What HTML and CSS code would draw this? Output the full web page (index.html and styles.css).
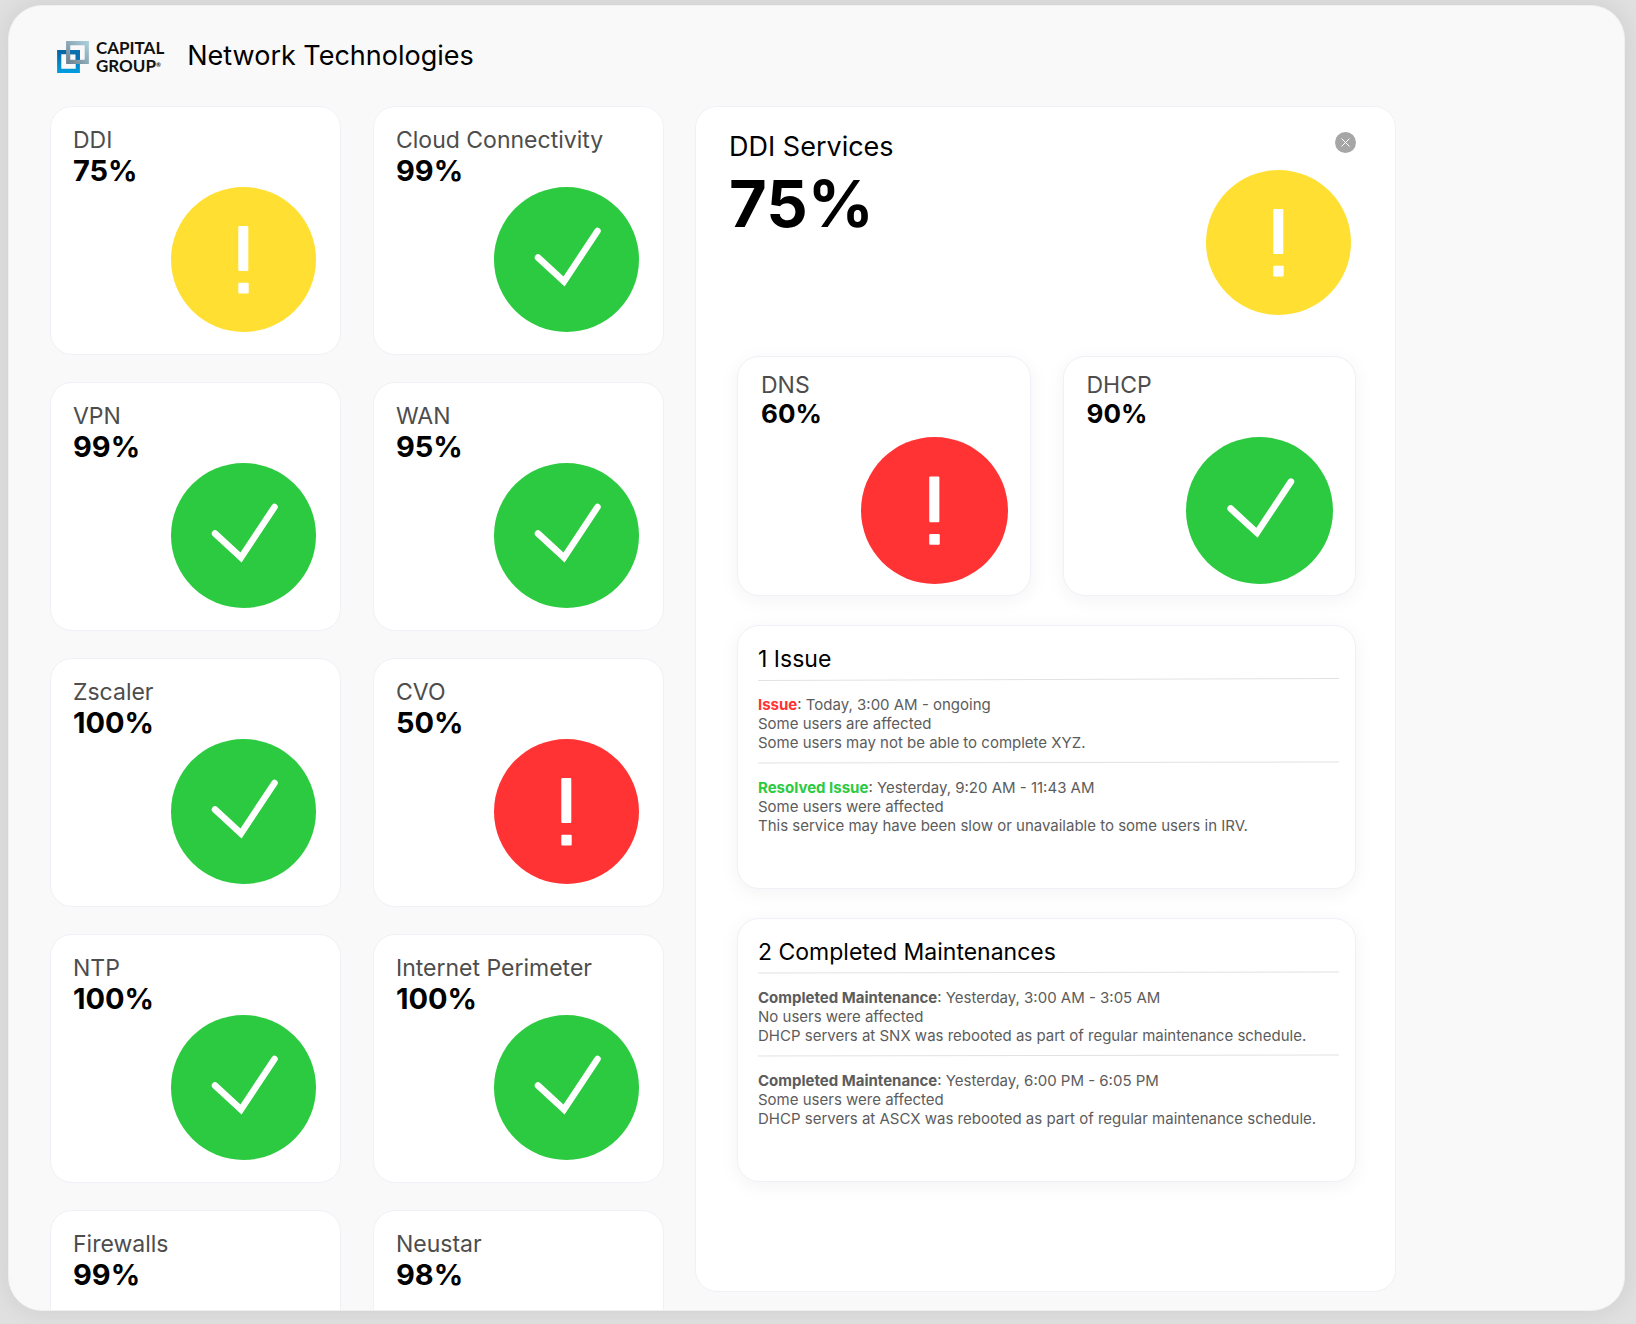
FILE: index.html
```html
<!DOCTYPE html>
<html lang="en">
<head>
<meta charset="utf-8">
<meta name="viewport" content="width=device-width, initial-scale=1">
<title>Network Technologies</title>
<link rel="stylesheet" href="styles.css">
</head>
<body>
<svg class="defs" aria-hidden="true">
  <symbol id="ok" viewBox="0 0 145 145">
    <circle cx="72.5" cy="72.5" r="72.5" fill="#2cca41"/>
    <path d="M44 70.5 70 94.500 103.500 44" fill="none" stroke="#fff" stroke-width="6.500" stroke-linecap="round"/>
  </symbol>
  <symbol id="alert" viewBox="0 0 145 145">
    <circle cx="72.5" cy="72.5" r="72.5" fill="currentColor"/>
    <rect x="67.300" y="39" width="10" height="45" rx="1" fill="#fff"/>
    <rect x="67.300" y="95.800" width="10.400" height="10.600" rx="1" fill="#fff"/>
  </symbol>
</svg>
<div class="window">
  <header class="topbar">
    <a class="logo" href="#" aria-label="Capital Group">
      <svg class="logo-mark" viewBox="0 0 32 32" aria-hidden="true">
        <defs>
          <linearGradient id="blue" x1="0" y1="0" x2="0" y2="1"><stop offset="0" stop-color="#0667a8"/><stop offset="1" stop-color="#009bdc"/></linearGradient>
          <linearGradient id="grey" x1="0" y1="1" x2="1" y2="0"><stop offset="0" stop-color="#6f8593"/><stop offset="1" stop-color="#a9ccda"/></linearGradient>
        </defs>
        <path d="M2.200 11.200H20.800V29.800H2.200Z" fill="none" stroke="url(#blue)" stroke-width="4.200"/>
        <path d="M11.200 2.200H29.800V20.800H11.200Z" fill="none" stroke="url(#grey)" stroke-width="4.200"/>
        <path d="M13.300 11.200H20.800V18.700" fill="none" stroke="#0b70b0" stroke-width="4.200"/>
      </svg>
      <span class="logo-text">CAPITAL<br>GROUP<sup>®</sup></span>
    </a>
    <h1 class="title">Network Technologies</h1>
  </header>
  <main class="layout">
    <section class="tiles" aria-label="Services">
      <article class="tile"><div><h2 class="label">DDI</h2><p class="value">75%</p></div><svg class="status warn"><use href="#alert"/></svg></article>
      <article class="tile"><div><h2 class="label">Cloud Connectivity</h2><p class="value">99%</p></div><svg class="status"><use href="#ok"/></svg></article>
      <article class="tile"><div><h2 class="label">VPN</h2><p class="value">99%</p></div><svg class="status"><use href="#ok"/></svg></article>
      <article class="tile"><div><h2 class="label">WAN</h2><p class="value">95%</p></div><svg class="status"><use href="#ok"/></svg></article>
      <article class="tile"><div><h2 class="label">Zscaler</h2><p class="value">100%</p></div><svg class="status"><use href="#ok"/></svg></article>
      <article class="tile"><div><h2 class="label">CVO</h2><p class="value">50%</p></div><svg class="status down"><use href="#alert"/></svg></article>
      <article class="tile"><div><h2 class="label">NTP</h2><p class="value">100%</p></div><svg class="status"><use href="#ok"/></svg></article>
      <article class="tile"><div><h2 class="label">Internet Perimeter</h2><p class="value">100%</p></div><svg class="status"><use href="#ok"/></svg></article>
      <article class="tile"><div><h2 class="label">Firewalls</h2><p class="value">99%</p></div></article>
      <article class="tile"><div><h2 class="label">Neustar</h2><p class="value">98%</p></div></article>
    </section>
    <section class="panel" aria-labelledby="panel-title">
      <header class="panel-head">
        <div>
          <h2 class="title" id="panel-title">DDI Services</h2>
          <p class="total">75%</p>
        </div>
        <div class="panel-side">
          <button class="close" type="button" aria-label="Close">
            <svg viewBox="0 0 9 9" aria-hidden="true"><path d="M.5.5 8.500 8.500M8.500.5.5 8.500" stroke="#fff" stroke-width="1"/></svg>
          </button>
          <svg class="status warn"><use href="#alert"/></svg>
        </div>
      </header>
      <div class="panel-body">
        <div class="parts">
          <article class="part"><div><h3 class="label">DNS</h3><p class="value">60%</p></div><svg class="status down"><use href="#alert"/></svg></article>
          <article class="part"><div><h3 class="label">DHCP</h3><p class="value">90%</p></div><svg class="status"><use href="#ok"/></svg></article>
        </div>
        <section class="log">
          <h3 class="log-title">1 Issue</h3>
          <svg class="rule" viewBox="0 0 100 3" preserveAspectRatio="none" aria-hidden="true"><path d="M0 2.500 100 .5"/></svg>
          <p class="entry"><strong class="open">Issue</strong>: Today, 3:00 AM - ongoing<br>Some users are affected<br>Some users may not be able to complete XYZ.</p>
          <svg class="rule" viewBox="0 0 100 3" preserveAspectRatio="none" aria-hidden="true"><path d="M0 2 100 1"/></svg>
          <p class="entry"><strong class="resolved">Resolved Issue</strong>: Yesterday, 9:20 AM - 11:43 AM<br>Some users were affected<br>This service may have been slow or unavailable to some users in IRV.</p>
        </section>
        <section class="log">
          <h3 class="log-title">2 Completed Maintenances</h3>
          <svg class="rule" viewBox="0 0 100 3" preserveAspectRatio="none" aria-hidden="true"><path d="M0 2 100 1"/></svg>
          <p class="entry"><strong>Completed Maintenance</strong>: Yesterday, 3:00 AM - 3:05 AM<br>No users were affected<br>DHCP servers at SNX was rebooted as part of regular maintenance schedule.</p>
          <svg class="rule" viewBox="0 0 100 3" preserveAspectRatio="none" aria-hidden="true"><path d="M0 2 100 1"/></svg>
          <p class="entry"><strong>Completed Maintenance</strong>: Yesterday, 6:00 PM - 6:05 PM<br>Some users were affected<br>DHCP servers at ASCX was rebooted as part of regular maintenance schedule.</p>
        </section>
      </div>
    </section>
  </main>
</div>
</body>
</html>
```

FILE: styles.css
```css
* { box-sizing: border-box; }
h1, h2, h3, p { margin: 0; font-weight: 400; }

body {
  margin: 0;
  height: 100vh;
  padding: 5px 11px 13px 8px;
  background: #e0e0e0;
  color: #000;
  font-family: Inter, "Liberation Sans", sans-serif;
  overflow: hidden;
}

.defs { display: none; }

.window {
  height: 100%;
  display: flex;
  flex-direction: column;
  overflow: hidden;
  border: 1px solid #f0f0f0;
  border-radius: 34px;
  background: #f9f9f9;
  box-shadow: 0 0 24px rgba(0, 0, 0, .09);
}

.topbar {
  display: flex;
  align-items: flex-start;
  gap: 23px;
  padding: 33px 48px;
  height: 100px;
  flex: none;
}

.logo {
  display: flex;
  align-items: center;
  gap: 7px;
  color: #111;
  text-decoration: none;
}
.logo-mark { width: 32px; height: 32px; }
.logo-text {
  font: 700 17px/18px Lato, sans-serif;
}
.logo-text sup { font-size: 6px; line-height: 0; vertical-align: 5px; }

.title { font-size: 27px; line-height: 34px; }

.layout {
  flex: 1;
  min-height: 0;
  display: grid;
  grid-template-columns: minmax(0, 614fr) minmax(0, 701fr);
  grid-template-rows: minmax(0, 1fr);
  gap: 31px;
  padding: 0 228px 18px 41px;
}

.tiles {
  display: grid;
  grid-template-columns: 1fr 1fr;
  grid-auto-rows: 249px;
  gap: 27px 32px;
}

.tile, .part, .log, .panel {
  border: 1px solid #f1f0f7;
  border-radius: 22px;
  background: #fff;
}

/* Text and status icon share one grid cell so they may overlap. */
.tile, .part { display: grid; }
.tile > *, .part > * { grid-area: 1 / 1; }
.tile { padding: 19px 24px 22px 22px; }

.label { font-size: 23px; line-height: 28px; color: #4d4d4d; }
.value { font-size: 29px; line-height: 34px; font-weight: 700; }

.status { width: 145px; height: 145px; display: block; place-self: end; }
.warn { color: #ffe032; }
.down { color: #ff3333; }

.panel-head {
  display: flex;
  justify-content: space-between;
  padding: 23px 39px 41px 33px;
}
.total { font-size: 65px; line-height: 80px; font-weight: 700; }
.panel-side {
  display: flex;
  flex-direction: column;
  gap: 17px;
  padding-top: 2px;
}
.panel-side .status { margin-right: 5px; }
.close {
  width: 21px;
  height: 21px;
  padding: 6px;
  align-self: flex-end;
  border: 0;
  border-radius: 50%;
  background: #a6a6a6;
}
.close svg { display: block; width: 9px; height: 9px; }

.panel-body {
  display: grid;
  gap: 29px;
  padding: 0 39px 0 41px;
}
.parts { display: grid; grid-template-columns: 1fr 1fr; gap: 32px; }
.part, .log { box-shadow: 0 4px 20px rgba(0, 0, 0, .05); }
.part { height: 240px; padding: 14px 22px 11px 23px; }
.part .value { font-size: 26px; line-height: 30px; }
.part .status { width: 147px; height: 147px; }

.log { min-height: 264px; padding: 19px 16px 30px 20px; }
.log-title { font-size: 23px; line-height: 28px; }
.rule { display: block; width: 100%; height: 3px; margin: 9px 0 14px; }
.log-title + .rule { margin-top: 5px; }
.rule path { fill: none; stroke: #e2e2e4; stroke-width: 1; vector-effect: non-scaling-stroke; }
.entry { font-size: 15px; line-height: 19px; color: #5c5c5c; }
.entry strong { font-weight: 700; }
.open { color: #ff3333; }
.resolved { color: #2cca41; }
```
